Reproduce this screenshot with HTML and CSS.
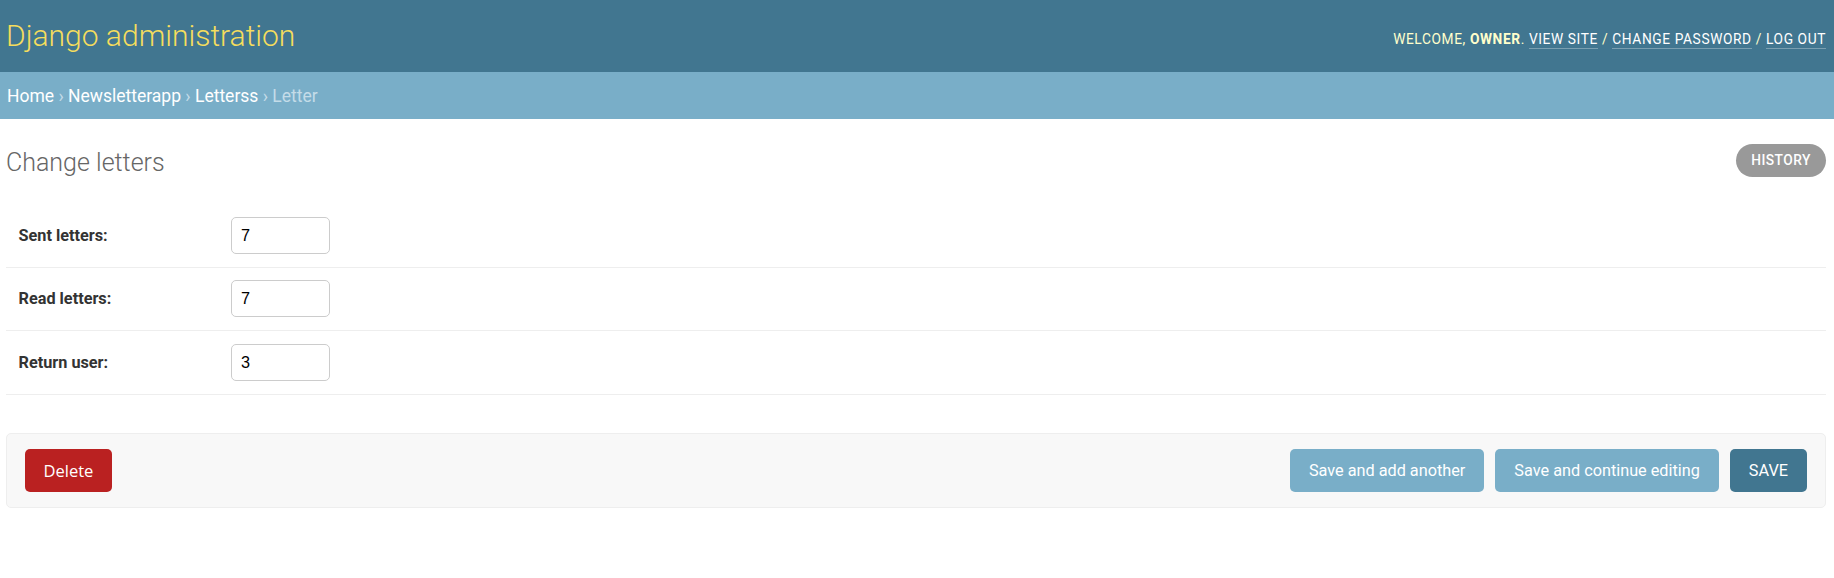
FILE: index.html
```html
<!DOCTYPE html>
<html lang="en">
<head>
<meta charset="utf-8">
<title>Change letters | Django site admin</title>
<link rel="stylesheet" href="styles.css">
</head>
<body>
<div class="header">
  <h1 class="branding">Django administration</h1>
  <div class="user-tools">Welcome, <strong>owner</strong>. <a href="#">View site</a> / <a href="#">Change password</a> / <a href="#">Log out</a></div>
</div>
<div class="breadcrumbs"><a href="#">Home</a> › <a href="#">Newsletterapp</a> › <a href="#">Letterss</a> › Letter</div>
<div class="content">
  <div class="title-row">
    <h1 class="title">Change letters</h1>
    <a class="history" href="#">History</a>
  </div>
  <form class="form">
    <div class="form-row">
      <label class="field-label">Sent letters:</label>
      <input class="field-input" type="text" value="7">
    </div>
    <div class="form-row">
      <label class="field-label">Read letters:</label>
      <input class="field-input" type="text" value="7">
    </div>
    <div class="form-row">
      <label class="field-label">Return user:</label>
      <input class="field-input" type="text" value="3">
    </div>
    <div class="submit-row">
      <a class="deletelink" href="#">Delete</a>
      <div class="submit-buttons">
        <span class="btn">Save and add another</span>
        <span class="btn">Save and continue editing</span>
        <span class="btn btn-default">Save</span>
      </div>
    </div>
  </form>
</div>
</body>
</html>
```
FILE: styles.css
```css
* { box-sizing: border-box; }
html, body { margin: 0; padding: 0; background: #fff; }
body {
  font-family: Roboto, "DejaVu Sans", Arial, sans-serif;
  color: #333;
  font-size: 16.25px;
}
a { text-decoration: none; }

.header {
  height: 72px;
  background: #417690;
  display: flex;
  align-items: center;
  justify-content: space-between;
  padding: 0 8px 0 6px;
}
.branding {
  margin: 0;
  font-size: 30px;
  font-weight: 300;
  color: #f5dd5d;
  line-height: 1;
}
.user-tools {
  font-size: 13.75px;
  letter-spacing: 0.6px;
  text-transform: uppercase;
  color: #ffc;
  padding-top: 6px;
}
.user-tools strong { font-weight: 700; }
.user-tools a {
  color: #fff;
  border-bottom: 1px solid rgba(255,255,255,0.3);
  padding-bottom: 1px;
}

.breadcrumbs {
  height: 47px;
  background: #79aec8;
  color: #c4dce8;
  font-size: 17.5px;
  display: flex;
  align-items: center;
  padding: 0 7px;
  white-space: pre;
}
.breadcrumbs a { color: #fff; }

.content { padding: 0 8px 0 6px; }
.title-row {
  display: flex;
  justify-content: space-between;
  align-items: center;
  height: 38px;
  margin-top: 24px;
  margin-bottom: 22px;
}
.title {
  margin: 0;
  font-size: 25px;
  font-weight: 300;
  color: #666;
}
.history {
  display: block;
  background: #999;
  color: #fff;
  font-size: 13.75px;
  font-weight: 500;
  letter-spacing: 0.5px;
  text-transform: uppercase;
  border-radius: 17px;
  height: 33px;
  line-height: 33px;
  padding: 0 15px;
  margin-top: -3px;
}

.form { padding-top: 1px; }
.form-row {
  display: flex;
  align-items: center;
  padding: 12.75px 12.5px;
  border-bottom: 1px solid #eee;
}
.field-label {
  width: 212.5px;
  font-weight: 700;
  color: #333;
  font-size: 16.25px;
}
.field-input {
  width: 99px;
  height: 37px;
  border: 1px solid #ccc;
  border-radius: 5px;
  padding: 0 9px;
  font-family: "Liberation Sans", Arial, sans-serif;
  font-size: 16.25px;
  color: #000;
  background: #fff;
}

.submit-row {
  margin-top: 38px;
  display: flex;
  justify-content: space-between;
  align-items: center;
  background: #f8f8f8;
  border: 1px solid #eee;
  border-radius: 5px;
  padding: 15px 18px;
}
.deletelink {
  display: block;
  background: #ba2121;
  color: #fff;
  font-family: "Open Sans", Arial, sans-serif;
  font-size: 16.5px;
  height: 43px;
  line-height: 43px;
  padding: 0 18.5px;
  border-radius: 5px;
}
.submit-buttons { display: flex; gap: 11px; }
.btn {
  display: block;
  background: #79aec8;
  color: #fff;
  font-size: 16.25px;
  height: 43px;
  line-height: 43px;
  padding: 0 19px;
  border-radius: 5px;
}
.btn-default {
  background: #417690;
  text-transform: uppercase;
}
```
